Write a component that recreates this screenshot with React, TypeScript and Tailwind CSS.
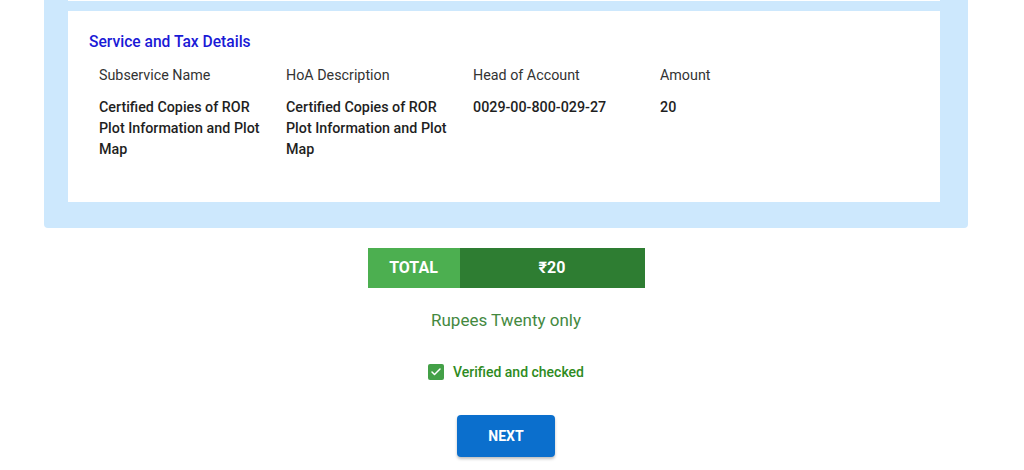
import { Check } from "lucide-react"

const rows = [
  {
    subservice: "Certified Copies of ROR Plot Information and Plot Map",
    hoa: "Certified Copies of ROR Plot Information and Plot Map",
    head: "0029-00-800-029-27",
    amount: "20",
  },
]

export default function App() {
  return (
    <div
      className="min-h-[470px] bg-white text-[#222]"
      style={{ fontFamily: "Roboto, 'Noto Sans', sans-serif" }}
    >
      <div className="ml-[44px] mr-[56px]">
        <div className="rounded-b-[4px] bg-[#cde8fd] pb-[26px] pl-6 pr-7">
          <div className="h-px bg-white" />
          <div className="mt-[10px] bg-white pb-[42px] pl-[21px] pr-4 pt-[22px]">
            <h2 className="text-[15.6px] font-medium leading-[18px] text-[#1a1ad6]">
              Service and Tax Details
            </h2>
            <table className="ml-[10px] mt-[14px] table-fixed border-collapse text-left text-[14.3px]">
              <thead>
                <tr className="text-[#333]">
                  <th className="w-[187px] pb-[12px] align-top font-normal leading-5">
                    Subservice Name
                  </th>
                  <th className="w-[187px] pb-[12px] align-top font-normal leading-5">
                    HoA Description
                  </th>
                  <th className="w-[187px] pb-[12px] align-top font-normal leading-5">
                    Head of Account
                  </th>
                  <th className="w-[187px] pb-[12px] align-top font-normal leading-5">
                    Amount
                  </th>
                </tr>
              </thead>
              <tbody>
                {rows.map((r) => (
                  <tr key={r.head} className="font-medium text-[#1f1f1f]">
                    <td className="pr-4 align-top leading-[21px]">{r.subservice}</td>
                    <td className="pr-4 align-top leading-[21px]">{r.hoa}</td>
                    <td className="pr-4 align-top leading-[21px]">{r.head}</td>
                    <td className="pr-4 align-top leading-[21px]">{r.amount}</td>
                  </tr>
                ))}
              </tbody>
            </table>
          </div>
        </div>

        <div className="flex flex-col items-center">
          <div className="mt-[20px] flex h-10 w-[277px] text-[16px] font-bold text-white">
            <div className="flex w-[92px] items-center justify-center bg-[#4caf50]">
              TOTAL
            </div>
            <div className="flex flex-1 items-center justify-center bg-[#2e7d32]">
              ₹20
            </div>
          </div>

          <p className="mt-[22px] text-[17px] leading-5 text-[#44893f]">
            Rupees Twenty only
          </p>

          <label className="mt-[32px] flex items-center gap-[9px]">
            <span className="flex h-4 w-4 items-center justify-center rounded-[2px] bg-[#43a047]">
              <Check className="h-3 w-3 text-white" strokeWidth={3} />
            </span>
            <span className="text-[14px] font-medium leading-5 text-[#2e8b22]">
              Verified and checked
            </span>
          </label>

          <button className="mt-[33px] h-[42px] w-[98px] rounded-[4px] bg-[#0b6fcd] text-[14px] font-bold text-white shadow-[0_2px_3px_rgba(0,0,0,0.25)]">
            NEXT
          </button>
        </div>
      </div>
    </div>
  )
}
